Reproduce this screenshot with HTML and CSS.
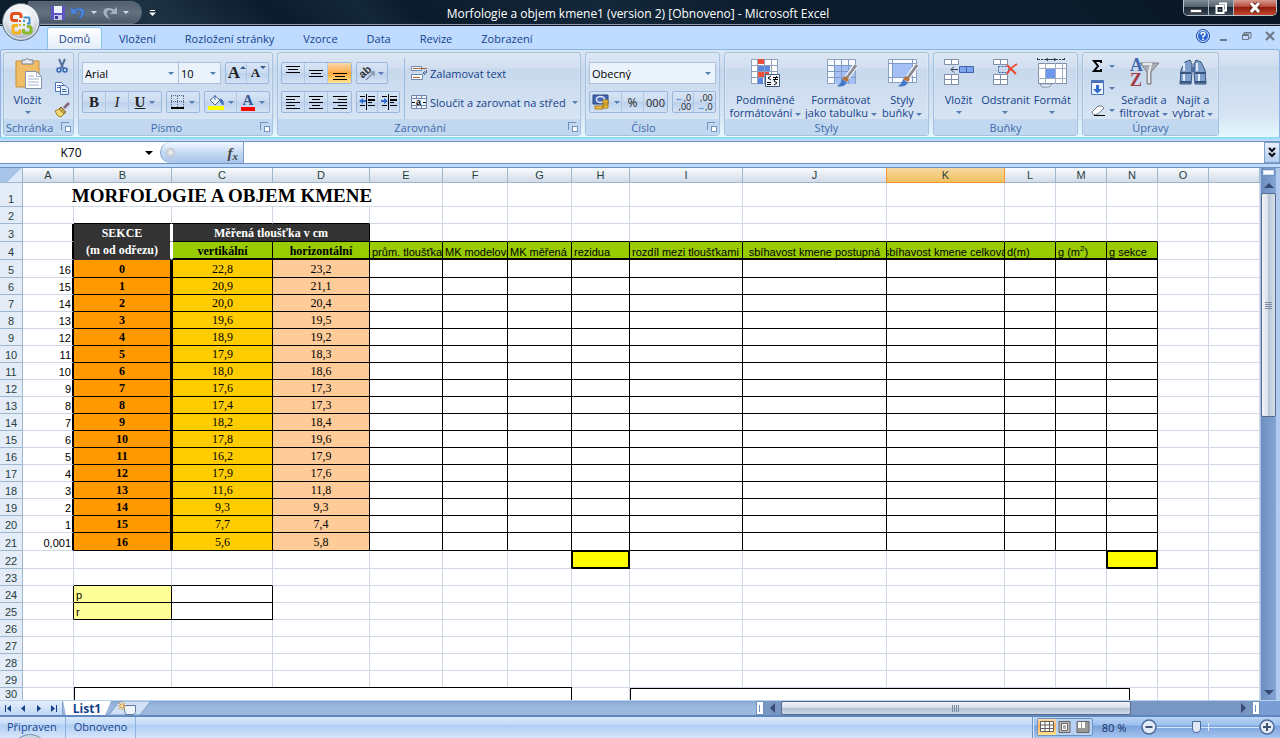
FILE: index.html
```html
<!DOCTYPE html>
<html lang="cs">
<head>
<meta charset="utf-8">
<title>Morfologie a objem kmene1 - Microsoft Excel</title>
<link rel="stylesheet" href="styles.css">
</head>
<body>
<div class="app">
<header class="titlebar">
  <button class="orb" aria-label="Office">
    <svg width="40" height="40" viewBox="0 0 40 40"><defs><radialGradient id="og" cx=".5" cy=".3" r=".75"><stop offset="0" stop-color="#fff"/><stop offset=".55" stop-color="#e4e8ee"/><stop offset="1" stop-color="#8e9cb2"/></radialGradient></defs><circle cx="20" cy="20" r="18.5" fill="url(#og)" stroke="#5c7086"/><circle cx="20" cy="20" r="17" fill="none" stroke="#fff" stroke-opacity=".8"/>
    <g fill="none"><path d="M17 18.500h-4q-2.500 0-2.500-2.500v-2q0-2.500 2.500-2.500h4.500q2.500 0 2.500 2.500v2" stroke="#e4511b" stroke-width="3"/><path d="M22.500 15.500h5q1 0 1 1v5h-2.500" stroke="#3f8fd0" stroke-width="2"/><path d="M17 23.500h-4q-1 0-1 1v4.500q0 2 2 2h3.500q1.500 0 1.500-1.500v-2" stroke="#f3b120" stroke-width="3"/><path d="M22.500 27v2q0 2 2 2h3.500q2 0 2-2v-2.500q0-2-2-2h-2" stroke="#8cb82e" stroke-width="3"/></g><path d="M18 18h2v2h-2z" fill="#e4511b"/><path d="M22 18h2v2h-2z" fill="#3f8fd0"/><path d="M18 22h2v2h-2z" fill="#f3b120"/><path d="M22 22h2v2h-2z" fill="#8cb82e"/></svg>
  </button>
  <div class="qat">
    <button aria-label="Uložit"><svg width="14" height="14" viewBox="0 0 14 14"><path d="M0 0h14v14H1L0 13z" fill="#5a55c4"/><path d="M3 0h8v7H3z" fill="#eef3fb"/><path d="M3 9h8v5H3z" fill="#c9cdea"/><path d="M4 10h3v3H4z" fill="#3a3590"/></svg></button>
    <button aria-label="Zpět"><svg width="14" height="14" viewBox="0 0 14 14"><path d="M0 1v7h7L4.500 5.500Q8 2.500 10 5.500q1 3-3 8 7-3 6.500-8.500-2-5-10.500-1.500z" fill="#4d86de" stroke="#2d58a4" stroke-width=".5"/></svg></button><i class="dd light"></i>
    <button aria-label="Znovu"><svg width="14" height="14" viewBox="0 0 14 14"><path d="M14 1v7H7l2.500-2.500Q6 2.500 4 5.500q-1 3 3 8-7-3-6.500-8.500 2-5 10.500-1.500z" fill="#a4b1c1"/></svg></button><i class="dd light"></i>
  </div>
  <button class="more" aria-label="Přizpůsobit panel"><svg width="7" height="6"><path d="M1 .5h5" stroke="#fff"/><path d="M0 2.500h7L3.500 6z" fill="#fff"/></svg></button>
  <h1>Morfologie a objem kmene1 (version 2) [Obnoveno] - Microsoft Excel</h1>
  <div class="win">
    <button aria-label="Minimalizovat"><svg width="12" height="12"><path d="M.5 7.500h11v3H.5z" fill="#fff" stroke="#555"/></svg></button>
    <button aria-label="Obnovit"><svg width="12" height="12"><path d="M4 1.500h7v7h-2M1.500 4h7v7h-7z" fill="none" stroke="#fff" stroke-width="2"/><path d="M4.500 7h1v1h-1z" fill="#fff"/></svg></button>
    <button class="close" aria-label="Zavřít"><svg width="12" height="12"><path d="M2 1l8 9M10 1l-8 9" stroke="#6b2a20" stroke-width="5"/><path d="M2 1l8 9M10 1l-8 9" stroke="#fff" stroke-width="3"/></svg></button>
  </div>
</header>
<nav class="tabs">
  <button class="active">Domů</button><button>Vložení</button><button>Rozložení stránky</button><button>Vzorce</button><button>Data</button><button>Revize</button><button>Zobrazení</button>
  <div class="docctl">
    <button aria-label="Nápověda"><svg width="14" height="14"><circle cx="7" cy="7" r="6.500" fill="#2c67d4" stroke="#234a99"/><circle cx="7" cy="7" r="5.500" fill="none" stroke="#dce9ff"/><path d="M5 5.500q0-2 2-2t2 1.800Q9 6.500 7 7.500v1" fill="none" stroke="#fff" stroke-width="1.500"/><path d="M6.300 9.500h1.500V11H6.300z" fill="#fff"/></svg></button>
    <button aria-label="Minimalizovat okno"><svg width="10" height="10"><path d="M1 8h7v2H1z" fill="#6c7886"/></svg></button>
    <button aria-label="Obnovit okno"><svg width="10" height="10"><path d="M.5 3.500h6v5h-6zM2 3V1.500h7V7H7M0 4.500h7M2 2h7" fill="none" stroke="#6c7886"/></svg></button>
    <button aria-label="Zavřít okno"><svg width="10" height="10"><path d="M1 1l8 8M9 1L1 9" stroke="#6c7886" stroke-width="2"/></svg></button>
  </div>
</nav>
<section class="ribbon">
  <div class="group g-clip">
    <div class="body clip">
      <button class="big"><svg width="30" height="32" viewBox="0 0 30 32"><path d="M3 3h23v26H3z" fill="#efbd68" stroke="#c58f3c"/><path d="M9 2h3q2-3 5 0h3v4H9z" fill="#e6e9ee" stroke="#76808f"/><path d="M12.500 13.500h11l5 5v12h-16z" fill="#fff" stroke="#8291ac"/><path d="M23.500 13.500v5h5M15 18h6M15 21h11M15 24h11M15 27h11" fill="none" stroke="#9fb2d0"/></svg>Vložit<i class="dd"></i></button>
      <div class="stack">
        <button aria-label="Vyjmout"><svg width="16" height="16"><path d="M5 1l4 9M11 1L7 10" stroke="#56719b" stroke-width="2"/><circle cx="5" cy="12" r="2" fill="none" stroke="#3264b0" stroke-width="1.500"/><circle cx="11" cy="12" r="2" fill="none" stroke="#3264b0" stroke-width="1.500"/></svg></button>
        <button aria-label="Kopírovat"><svg width="16" height="16"><path d="M1.500 2.500h6l2 2v7h-8z" fill="#fff" stroke="#4a72b4"/><path d="M6.500 5.500h5l3 3v6h-8z" fill="#e5eefb" stroke="#4a72b4"/><path d="M3 5.500h3M3 7.500h3M8 9.500h4M8 11.500h5" stroke="#4a72b4"/></svg></button>
        <button aria-label="Kopírovat formát"><svg width="16" height="16"><path d="M15 1l-5 5" stroke="#8a6a80" stroke-width="3"/><path d="M7 5l5 5-2 2-5-5z" fill="#c8a94b" stroke="#7a6426"/><path d="M5 7l5 5-3 3Q3 15 1 9z" fill="#f2d873" stroke="#9a8235"/></svg></button>
      </div>
    </div>
    <footer>Schránka<i class="launch"></i></footer>
  </div>
  <div class="group g-font">
    <div class="body rows">
      <div class="row">
        <span class="joined"><label class="sel name"><select aria-label="Písmo"><option>Arial</option></select><i class="dd"></i></label><label class="sel size"><select aria-label="Velikost"><option>10</option></select><i class="dd"></i></label></span>
        <span class="set two"><button aria-label="Zvětšit písmo"><b class="ser a1">A</b><i class="mini up"></i></button><button aria-label="Zmenšit písmo"><b class="ser a2">A</b><i class="mini"></i></button></span>
      </div>
      <div class="row">
        <span class="set"><button><b class="ser">B</b></button><button><em class="ser">I</em></button><button class="wide"><b class="ser"><u>U</u></b><i class="dd"></i></button></span>
        <span class="set"><button class="wide" aria-label="Ohraničení"><svg width="14" height="14"><path d="M.5 1v12M6.500 1v12M12.500 1v12M0 .5h13M0 6.500h13" stroke="#56688a" stroke-dasharray="1 1"/><path d="M0 13h13" stroke="#000" stroke-width="2"/></svg><i class="dd"></i></button></span>
        <span class="set"><button class="wide" aria-label="Barva výplně"><svg width="16" height="16"><path d="M2 6l5-4 5 4-5 5z" fill="#eef3fb" stroke="#526a92"/><path d="M7 1v5M12 5q4 1 3 6l-3-4" fill="#3e6ab6" stroke="#3e6ab6"/><path d="M0 12h16v4H0z" fill="#ff0"/></svg><i class="dd"></i></button><button class="wide fc" aria-label="Barva písma"><b class="ser">A</b><i class="dd"></i></button></span>
      </div>
    </div>
    <footer>Písmo<i class="launch"></i></footer>
  </div>
  <div class="group g-align">
    <div class="body cols">
      <div class="rows">
        <div class="row">
          <span class="set"><button aria-label="Nahoru"><svg width="16" height="16"><path d="M1 1.500h14M3 4.500h10M1 7.500h14" stroke="#000"/></svg></button><button aria-label="Na střed svisle"><svg width="16" height="16"><path d="M1 5.500h14M3 8.500h10M1 11.500h14" stroke="#000"/></svg></button><button class="on" aria-label="Dolů"><svg width="16" height="16"><path d="M1 8.500h14M3 11.500h10M1 14.500h14" stroke="#000"/></svg></button></span>
          <span class="set"><button class="ori" aria-label="Orientace"><svg width="16" height="16"><text x="0" y="11" transform="rotate(-42 5 9)" font-family="Liberation Sans" font-size="11" font-weight="bold" fill="#333">ab</text><path d="M6 15l8-8M14 11V7h-4" fill="none" stroke="#8795aa" stroke-width="1.500"/></svg><i class="dd"></i></button></span>
        </div>
        <div class="row">
          <span class="set"><button aria-label="Vlevo"><svg width="16" height="16"><path d="M1 2.500h14M1 5.500h9M1 8.500h14M1 11.500h9M1 14.500h14" stroke="#000"/></svg></button><button aria-label="Na střed"><svg width="16" height="16"><path d="M1 2.500h14M4 5.500h8M1 8.500h14M4 11.500h8M1 14.500h14" stroke="#000"/></svg></button><button aria-label="Vpravo"><svg width="16" height="16"><path d="M1 2.500h14M6 5.500h9M1 8.500h14M6 11.500h9M1 14.500h14" stroke="#000"/></svg></button></span>
          <span class="set two"><button aria-label="Zmenšit odsazení"><svg width="16" height="16"><path d="M1 2.500h5M9 2.500h7M9 8.500h4M1 11.500h5M9 11.500h7M7.500 0v16" stroke="#000"/><path d="M9 5h7v2H9z"/><path d="M0 7l4-3v2h3v2H4v2z" fill="#2f6ad0"/></svg></button><button aria-label="Zvětšit odsazení"><svg width="16" height="16"><path d="M1 2.500h5M9 2.500h7M9 8.500h4M1 11.500h5M9 11.500h7M7.500 0v16" stroke="#000"/><path d="M9 5h7v2H9z"/><path d="M7 7L3 4v2H0v2h3v2z" fill="#2f6ad0"/></svg></button></span>
        </div>
      </div>
      <div class="rows wrapcol">
        <button class="lbl"><svg width="16" height="16"><path d="M.5 1.500h10v4H.5zM.5 9.500h11v5H.5z" fill="#fff" stroke="#6f86ad"/><path d="M2 3.500h14M2 12.500h7" stroke="#a2672d"/><path d="M15.500 5v3H13M14 6l-2 2 2 2" fill="none" stroke="#4a6896"/></svg>Zalamovat text</button>
        <button class="lbl"><svg width="16" height="16"><path d="M.5 1.500h15v13H.5zM.5 4.500h15M.5 11.500h15M5.500 1v3M10.500 1v3M5.500 12v3M10.500 12v3" fill="#eef4fc" stroke="#6f86ad"/><path d="M1 8.500h3M12 8.500h3" stroke="#000"/><text x="5" y="11" font-family="Liberation Sans" font-size="9" font-weight="bold">a</text></svg>Sloučit a zarovnat na střed<i class="dd"></i></button>
      </div>
    </div>
    <footer>Zarovnání<i class="launch"></i></footer>
  </div>
  <div class="group g-num">
    <div class="body rows">
      <div class="row"><label class="sel full"><select aria-label="Formát čísla"><option>Obecný</option></select><i class="dd"></i></label></div>
      <div class="row">
        <span class="set"><button class="wide" aria-label="Účetní formát"><svg width="18" height="16"><path d="M1 1h15v9H1z" fill="#4468b4" stroke="#28447c"/><ellipse cx="8.500" cy="5.500" rx="4" ry="3" fill="none" stroke="#dfe9f8" stroke-width="1.500"/><path d="M11 6h5v8h-5zM3 12h8v3H3z" fill="#eec044" stroke="#a87a18"/><path d="M11 9h5M11 11h5" stroke="#a87a18"/></svg><i class="dd"></i></button><button class="pc">%</button><button class="ooo">000</button></span>
        <span class="set two dec"><button aria-label="Přidat desetinné místo"><span><i>←</i>,0<br>,00</span></button><button aria-label="Odebrat desetinné místo"><span>,00<br><i>→</i>,0</span></button></span>
      </div>
    </div>
    <footer>Číslo<i class="launch"></i></footer>
  </div>
  <div class="group g-style">
    <div class="body bigs">
      <button class="big w76"><svg width="32" height="32"><path d="M2.500 1.500h26v24h-26z" fill="#fff" stroke="#8da0bd"/><path d="M8 1h7v5H8zM8 14h12v6H8z" fill="#ee5137"/><path d="M8 7h13v6H8zM8 20h6v6H8z" fill="#5c86dc"/><path d="M2 7.500h27M2 13.500h27M2 19.500h27M8.500 1v25M15.500 1v25M22.500 1v25" stroke="#8da0bd"/><path d="M16.500 16.500h14v12h-14z" fill="#f5f8fd" stroke="#42587d"/><path d="M22 18l-3 2 3 2M18 24.500h4M18 26.500h4M24 19.500h5M24 21.500h5M28 18l-3 5M25 23l3 2-3 2" fill="none" stroke="#000"/></svg><span>Podmíněné<br>formátování <i class="dd"></i></span></button>
      <button class="big w76"><svg width="32" height="32"><path d="M2.500 1.500h28v24h-28z" fill="#f7faff" stroke="#8da0bd"/><path d="M9 8h21v18H9z" fill="#a4c0f4"/><path d="M2 7.500h29M2 13.500h29M2 19.500h29M9.500 1v25M16.500 1v25M23.500 1v25" stroke="#7f9ac6"/><path d="M31 7L21 21" stroke="#fff" stroke-width="5"/><path d="M31 7L21 21" stroke="#8b8e96" stroke-width="3"/><path d="M20 18l4 3-2 3-5-3z" fill="#b9743b"/><path d="M17 21l5 4q-4 5-10 3 4-2 5-7z" fill="#4377c7"/></svg><span>Formátovat<br>jako tabulku <i class="dd"></i></span></button>
      <button class="big w46"><svg width="32" height="32"><path d="M2.500 1.500h28v23h-28z" fill="#f7faff" stroke="#8da0bd"/><path d="M7 6h19v13H7z" fill="#a4c0f4"/><path d="M2 5.500h29M2 19.500h29M6.500 1v24M26.500 1v24" stroke="#7f9ac6"/><path d="M31 7L21 21" stroke="#fff" stroke-width="5"/><path d="M31 7L21 21" stroke="#8b8e96" stroke-width="3"/><path d="M20 18l4 3-2 3-5-3z" fill="#b9743b"/><path d="M17 21l5 4q-4 5-10 3 4-2 5-7z" fill="#4377c7"/></svg><span>Styly<br>buňky <i class="dd"></i></span></button>
    </div>
    <footer>Styly</footer>
  </div>
  <div class="group g-cell">
    <div class="body bigs">
      <button class="big w46"><svg width="32" height="32"><path d="M1.500 1.500h14v5h-14zM8.500 1.500v5M1.500 16.500h14v10h-14zM8.500 16.500v10M1.500 21.500h14" fill="#fff" stroke="#7f8fa9"/><path d="M16.500 8.500h14v6h-14zM23.500 8.500v6" fill="#7ea4ee" stroke="#3f62ab"/><path d="M8 11.500h7M11 8.500l-3 3 3 3" fill="none" stroke="#333f55"/></svg>Vložit<i class="dd"></i></button>
      <button class="big w48"><svg width="32" height="32"><path d="M4.500 1.500h14v5h-14zM11.500 1.500v5M4.500 16.500h14v10h-14zM11.500 16.500v10M4.500 21.500h14" fill="#fff" stroke="#7f8fa9"/><path d="M9.500 8.500h10v6h-10z" fill="none" stroke="#3f62ab" stroke-dasharray="2 1"/><path d="M18 7l9 9M28 6q-7 4-10 10" stroke="#f04a2e" stroke-width="2" fill="none"/></svg>Odstranit<i class="dd"></i></button>
      <button class="big w46"><svg width="32" height="32"><path d="M2.500 5.500h28v20h-28z" fill="#fff" stroke="#7f8fa9"/><path d="M10 10h9v11h-9z" fill="#6c97ea"/><path d="M2 10.500h29M2 20.500h29M9.500 5v21M19.500 5v21M26.500 5v21" stroke="#9dadc6"/><path d="M2 1.500h26M1.500 0v3M28.500 0v3" stroke="#333f55" stroke-dasharray="2 1"/><path d="M10 1.500h10M12 0l-2 1.500 2 1.500M18 0l2 1.500-2 1.500" fill="none" stroke="#333f55"/><path d="M4 26h12l-3 3H6z" fill="#eef2f8" stroke="#7f8fa9"/></svg>Formát<i class="dd"></i></button>
    </div>
    <footer>Buňky</footer>
  </div>
  <div class="group g-edit">
    <div class="body cols">
      <div class="stack edit">
        <button aria-label="Součet"><svg width="14" height="16"><path d="M10 5V3H3l4 5-4 5h7v-2" fill="none" stroke="#000" stroke-width="2"/></svg><i class="dd"></i></button>
        <button aria-label="Výplň"><svg width="14" height="16"><path d="M.5.500h12v14H.5z" fill="#eaf2fd" stroke="#4a72b4"/><path d="M1 2h11" stroke="#4a72b4" stroke-width="2"/><path d="M5 5h3v4h3l-4.500 4.500L2 9h3z" fill="#2f6ad0"/></svg><i class="dd"></i></button>
        <button aria-label="Vymazat"><svg width="14" height="16"><path d="M1 10l6-6q5-1 6 2l-6 6q-6 2-6-2z" fill="#fff" stroke="#6b7789"/><path d="M3 13.500h11" stroke="#000"/></svg><i class="dd"></i></button>
      </div>
      <button class="big w56"><svg width="32" height="32"><path d="M12 5h19l-8 9v12h-4V14z" fill="#a9acb2" stroke="#7c7f85"/><path d="M15 6h8l-2 8v11" fill="none" stroke="#e8e9eb" stroke-width="2"/><text x="2" y="13" font-family="Liberation Serif" font-size="18" font-weight="bold" fill="#4166ae">A</text><text x="2" y="28" font-family="Liberation Serif" font-size="18" font-weight="bold" fill="#a43b42">Z</text></svg><span>Seřadit a<br>filtrovat <i class="dd"></i></span></button>
      <button class="big w46"><svg width="32" height="32"><path d="M8 4l5-2 2 4v8l-1 12H3l1-14zM24 4l-5-2-2 4v8l1 12h11l-1-14z" fill="#7f9fcc" stroke="#38557f"/><path d="M7 5v8M7 16v9M20 5v8M22 16v9" stroke="#dfeafa" stroke-width="2"/><path d="M3 15h11M18 15h11M3 24h11M18 24h11" stroke="#38557f" stroke-width="2"/><path d="M14 9h4v5h-4z" fill="#506f9e"/></svg><span>Najít a<br>vybrat <i class="dd"></i></span></button>
    </div>
    <footer>Úpravy</footer>
  </div>
</section>
<div class="formula">
  <input class="namebox" aria-label="Pole názvů" value="K70"><i class="dd black"></i>
  <div class="fx"><span class="knob"></span><button aria-label="Vložit funkci">f<sub>x</sub></button></div>
  <input class="fbar" aria-label="Řádek vzorců">
  <button class="expand" aria-label="Rozbalit"><svg width="9" height="11"><path d="M1 1l3 3 3-3M1 6l3 3 3-3" fill="none" stroke="#000" stroke-width="2"/></svg></button>
</div>
<main class="work">
  <div class="sheet">
  <table>
    <colgroup><col class="c0"><col class="cA"><col class="cB"><col class="cC"><col class="cD"><col class="cE"><col class="cF"><col class="cG"><col class="cH"><col class="cI"><col class="cJ"><col class="cK"><col class="cL"><col class="cL"><col class="cL"><col class="cL"><col></colgroup>
    <thead><tr><th class="corner"><th>A<th>B<th>C<th>D<th>E<th>F<th>G<th>H<th>I<th>J<th class="cur">K<th>L<th>M<th>N<th>O<th></tr></thead>
    <tbody>
    <tr class="r1"><th>1<td class="nr"><td colspan="3" class="nr"><div class="heading">MORFOLOGIE A OBJEM KMENE</div><td><td><td><td><td><td><td><td><td><td><td><td></tr>
    <tr class="r2"><th>2<td><td class="kb"><td class="kb"><td class="kb"><td><td><td><td><td><td><td><td><td><td><td><td></tr>
    <tr class="r3"><th>3<td class="tl"><td class="dark nob">SEKCE<td colspan="2" class="dark kb kr wl">Měřená tloušťka v cm<td class="kb"><td class="kb"><td class="kb"><td class="kb"><td class="kb"><td class="kb"><td class="kb"><td class="kb"><td class="kb"><td class="kb"><td><td></tr>
    <tr class="r3 green"><th>4<td class="tl"><td class="dark nob">(m od odřezu)<td class="gb wl">vertikální<td class="gb">horizontální<td>prům. tloušťka<td>MK modelová<td>MK měřená<td>rezidua<td>rozdíl mezi tloušťkami<td class="c">sbíhavost kmene postupná<td class="mid"><div>sbíhavost kmene celková</div><td>d(m)<td>g (m<sup>2</sup>)<td>g sekce<td class="w"><td class="w"></tr>
    <tr class="d r3"><th>5<td>16<td>0<td>22,8<td>23,2<td><td><td><td><td><td><td><td><td><td><td><td></tr>
    <tr class="d"><th>6<td>15<td>1<td>20,9<td>21,1<td><td><td><td><td><td><td><td><td><td><td><td></tr>
    <tr class="d"><th>7<td>14<td>2<td>20,0<td>20,4<td><td><td><td><td><td><td><td><td><td><td><td></tr>
    <tr class="d"><th>8<td>13<td>3<td>19,6<td>19,5<td><td><td><td><td><td><td><td><td><td><td><td></tr>
    <tr class="d"><th>9<td>12<td>4<td>18,9<td>19,2<td><td><td><td><td><td><td><td><td><td><td><td></tr>
    <tr class="d"><th>10<td>11<td>5<td>17,9<td>18,3<td><td><td><td><td><td><td><td><td><td><td><td></tr>
    <tr class="d"><th>11<td>10<td>6<td>18,0<td>18,6<td><td><td><td><td><td><td><td><td><td><td><td></tr>
    <tr class="d"><th>12<td>9<td>7<td>17,6<td>17,3<td><td><td><td><td><td><td><td><td><td><td><td></tr>
    <tr class="d"><th>13<td>8<td>8<td>17,4<td>17,3<td><td><td><td><td><td><td><td><td><td><td><td></tr>
    <tr class="d"><th>14<td>7<td>9<td>18,2<td>18,4<td><td><td><td><td><td><td><td><td><td><td><td></tr>
    <tr class="d"><th>15<td>6<td>10<td>17,8<td>19,6<td><td><td><td><td><td><td><td><td><td><td><td></tr>
    <tr class="d"><th>16<td>5<td>11<td>16,2<td>17,9<td><td><td><td><td><td><td><td><td><td><td><td></tr>
    <tr class="d"><th>17<td>4<td>12<td>17,9<td>17,6<td><td><td><td><td><td><td><td><td><td><td><td></tr>
    <tr class="d"><th>18<td>3<td>13<td>11,6<td>11,8<td><td><td><td><td><td><td><td><td><td><td><td></tr>
    <tr class="d"><th>19<td>2<td>14<td>9,3<td>9,3<td><td><td><td><td><td><td><td><td><td><td><td></tr>
    <tr class="d"><th>20<td>1<td>15<td>7,7<td>7,4<td><td><td><td><td><td><td><td><td><td><td><td></tr>
    <tr class="d r3"><th>21<td>0,001<td>16<td>5,6<td>5,8<td><td><td><td><td><td><td><td><td><td><td><td></tr>
    <tr class="r3"><th>22<td><td><td><td><td><td><td class="kr"><td class="yel"><td><td><td><td><td class="kr"><td class="yel"><td><td></tr>
    <tr><th>23<td><td class="kb"><td class="kb"><td><td><td><td><td><td><td><td><td><td><td><td><td></tr>
    <tr><th>24<td class="kr"><td class="pr kb kr">p<td class="kb kr"><td><td><td><td><td><td><td><td><td><td><td><td><td></tr>
    <tr><th>25<td class="kr"><td class="pr kb kr">r<td class="kb kr"><td><td><td><td><td><td><td><td><td><td><td><td><td></tr>
    <tr><th>26<td><td><td><td><td><td><td><td><td><td><td><td><td><td><td><td></tr>
    <tr><th>27<td><td><td><td><td><td><td><td><td><td><td><td><td><td><td><td></tr>
    <tr><th>28<td><td><td><td><td><td><td><td><td><td><td><td><td><td><td><td></tr>
    <tr><th>29<td><td><td><td><td><td><td><td><td><td><td><td><td><td><td><td></tr>
    <tr><th class="half">30<td><td><td><td><td><td><td><td><td><td><td><td><td><td><td><td></tr>
    </tbody>
  </table>
  <div class="chart chart-a"></div>
  <div class="chart chart-b"></div>
  </div>
  <aside class="vscroll"><span class="split"></span><button aria-label="Nahoru"><i class="tri up"></i></button><span class="thumb"></span><button class="down" aria-label="Dolů"><i class="tri"></i></button></aside>
</main>
<div class="sheetbar">
  <div class="navs"><button aria-label="První"><svg width="9" height="9"><path d="M1.500 1v7" stroke="#15428b"/><path d="M7 1v7L3 4.500z" fill="#15428b"/></svg></button><button aria-label="Předchozí"><svg width="9" height="9"><path d="M6 1v7L2 4.500z" fill="#15428b"/></svg></button><button aria-label="Další"><svg width="9" height="9"><path d="M3 1v7l4-3.500z" fill="#15428b"/></svg></button><button aria-label="Poslední"><svg width="9" height="9"><path d="M7.500 1v7" stroke="#15428b"/><path d="M2 1v7l4-3.500z" fill="#15428b"/></svg></button></div>
  <button class="stab">List1</button>
  <button class="newtab" aria-label="Vložit list"><svg width="46" height="15"><path d="M0 14q4 0 6-4l6-8q2-2 6-2h27L34 14z" fill="#cfe0f7" stroke="#7c9dcd"/><path d="M17.500 4.500h12v7l-2 2h-8z" fill="#eef4fc" stroke="#667aa0"/><path d="M16 1v8M12 5h8M13 2l6 6M19 2l-6 6" stroke="#e79b25"/><circle cx="16" cy="5" r="1" fill="#fff"/></svg></button>
  <span class="grow"></span>
  <span class="hsplit"></span><button class="harrow" aria-label="Vlevo"><i class="side l"></i></button>
  <div class="htrack"><span class="hthumb"><i></i></span></div><button class="harrow" aria-label="Vpravo"><i class="side r"></i></button><span class="hsplit"></span><span class="hend"></span>
</div>
<footer class="status">
  <span class="cell">Připraven<i class="bump"></i></span><span class="cell">Obnoveno</span><span class="grow"></span>
  <div class="zoomer">
    <div class="views"><button class="on" aria-label="Normální"><svg width="14" height="12"><path d="M.5.500h13v10H.5zM.5 4h13M.5 7.500h13M5 .5v10M9.500.500v10" fill="#fff" stroke="#66605a"/></svg></button><button aria-label="Rozložení"><svg width="14" height="12"><path d="M1 .5h11v11H1z" fill="#b9b9b9" stroke="#666"/><path d="M3.500 2.500h6v7h-6zM5 5h3M5 7h3" fill="#fff" stroke="#666"/></svg></button><button aria-label="Konce stránek"><svg width="14" height="12"><path d="M1 .5h12v11H1z" fill="#999" stroke="#666"/><path d="M2 1h3v6H2zM6 1h3v6H6z" fill="#fff"/></svg></button></div>
    <button class="pct">80 %</button>
    <button aria-label="Oddálit"><svg width="16" height="16"><circle cx="8" cy="8" r="7" fill="#e3ebf6" stroke="#4c6c9c" stroke-width="1.500"/><path d="M4.500 8h7" stroke="#3f5470" stroke-width="2"/></svg></button>
    <input type="range" min="0" max="100" value="38" aria-label="Lupa">
    <button aria-label="Přiblížit"><svg width="16" height="16"><circle cx="8" cy="8" r="7" fill="#e3ebf6" stroke="#4c6c9c" stroke-width="1.500"/><path d="M4 8h8M8 4v8" stroke="#3f5470" stroke-width="2"/></svg></button>
  </div>
</footer>
</div>
</body>
</html>
```
FILE: styles.css
```css
* { box-sizing: border-box; }
body { margin: 0; }
.app { height: 100vh; display: flex; flex-direction: column; overflow: hidden; background: #bfdbff; color: #15428b; font: 11px/13px "Open Sans", "Noto Sans", sans-serif; }
button, input, select { font: inherit; color: inherit; margin: 0; padding: 0; border: 0; background: none; }
button { display: flex; align-items: center; justify-content: center; }
svg { display: block; flex: none; }
.grow { flex: 1; }

.dd { display: inline-block; flex: none; vertical-align: middle; border: 3px solid transparent; border-top-color: #567db1; border-bottom: 0; }
.dd.light { border-top-color: #d5e0ee; }
.dd.black { border-width: 4px 4px 0; border-top-color: #000; }

/* Title bar */
.titlebar { position: relative; flex: none; height: 26px; display: flex; align-items: center; color: #fff; border-bottom: 1px solid #0a1520; box-shadow: inset 0 -1px #8f9ba5; background: linear-gradient(40deg, #0d1d2c 0 8%, #1d3344 12%, #1a2e40 15%, #0b1b2c 22%, #14283a 29%, #0b1b2c 33%, #14283a 48%, #0b1c2d 60%, #0b1b2b 84%, #081522); }
.titlebar h1 { flex: 1; margin: 2px 160px 0 0; font-size: 12px; line-height: 16px; font-weight: 400; text-align: center; white-space: nowrap; }
.orb { position: absolute; left: 1px; top: 2px; z-index: 3; }
.qat { width: 114px; height: 23px; margin-left: 28px; padding-left: 23px; display: flex; align-items: center; gap: 6px; border: 1px solid #56687a; border-left: 0; border-radius: 0 12px 12px 0; background: linear-gradient(#52606f, #64717f 50%, #4b5967); }
.more { margin-left: 7px; }
.win { position: absolute; right: 3px; top: 0; display: flex; height: 16px; border: 1px solid #b9c2ca; border-top: 0; border-radius: 0 0 5px 5px; overflow: hidden; }
.win button { width: 25px; border-right: 1px solid #a9b4bd; background: linear-gradient(#7f8b96, #56626f 45%, #1a2835 50%, #3b4855); }
.win .close { width: 42px; border: 0; background: linear-gradient(#d59b90, #b9493a 45%, #8e1d0d 50%, #c5482c); }

/* Ribbon tabs */
.tabs { flex: none; height: 23px; display: flex; align-items: flex-end; gap: 1px; padding-left: 47px; font-size: 11px; }
.tabs > button { height: 22px; padding: 0 14px; }
.tabs > .active { min-width: 55px; padding: 0 10px; margin-right: 2px; border: 1px solid #86c5e8; border-bottom: 0; border-radius: 3px 3px 0 0; background: linear-gradient(#fff, #e3edf9); }
.docctl { margin: 0 5px 6px auto; display: flex; gap: 13px; align-items: center; }
.docctl button:first-child { margin-right: -4px; }

/* Ribbon */
.ribbon { flex: none; display: flex; gap: 4px; height: 90px; padding: 2px 2px 1px; border: 1px solid #8db2e3; border-width: 1px 1px 2px; border-bottom-color: #8fdcf5; border-radius: 3px; background: linear-gradient(#dbe6f4, #cfdef0 16px, #c8d8ed 17px, #d6e4f4 65px, #e4f8ff); }
.group { flex: none; display: flex; flex-direction: column; border: 1px solid #a5c3df; border-radius: 3px; box-shadow: inset 0 0 0 1px #e3eefa66; background: linear-gradient(#dce7f4, #d2dff0 15px, #c8d8ec 16px, #dbe8f6); }
.group > footer { height: 16px; margin-top: auto; display: flex; align-items: center; justify-content: center; color: #3e6aaa; background: #c1d8f0; position: relative; }
.g-font > footer, .g-align > footer, .g-num > footer { padding-right: 18px; }
.g-clip > footer { justify-content: flex-start; padding-left: 2px; }
.launch { position: absolute; right: 4px; top: 3px; width: 8px; height: 8px; border: 1px solid #6f93bf; border-width: 1px 0 0 1px; }
.launch::after { content: ""; position: absolute; left: 3px; top: 3px; width: 4px; height: 4px; border: 1px solid #6f93bf; background: #fff; }
.g-clip { width: 71px; }
.g-font { width: 195px; }
.g-align { width: 304px; }
.g-num { width: 135px; }
.g-style { width: 205px; }
.g-cell { width: 145px; }
.g-edit { width: 137px; }
.body { flex: 1; display: flex; padding: 9px 3px 0; }
.rows { display: flex; flex-direction: column; gap: 7px; }
.row { display: flex; gap: 4px; height: 22px; }
.cols, .bigs, .clip { padding-top: 5px; }
.clip { padding-left: 1px; }
.clip, .bigs { gap: 1px; }
.cols > .rows { padding-top: 4px; }
.stack { display: flex; flex-direction: column; gap: 6px; padding-left: 3px; }
.edit { width: 30px; padding-left: 5px; margin-right: 2px; }
.edit button { gap: 4px; }
.big { flex-direction: column; justify-content: flex-start; align-self: flex-start; width: 46px; white-space: nowrap; line-height: 13px; gap: 3px; }
.big > .dd { margin-top: 2px; }
.w48 { width: 50px; }
.w56 { width: 56px; }
.w76 { width: 75px; }
.sel { position: relative; display: flex; height: 22px; border: 1px solid #abc1de; background: #eaf2fb; color: #000; }
.sel select { appearance: none; width: 100%; padding: 0 2px; }
.sel .dd { position: absolute; right: 4px; top: 9px; pointer-events: none; }
.joined { display: flex; }
.name { width: 97px; }
.size { width: 43px; margin-left: -1px; }
.full { width: 127px; }
.set { display: flex; border: 1px solid #9ab8dd; border-radius: 2px; background: linear-gradient(#d7e4f5, #cbdbf0 48%, #bdd1ec 50%, #d2e2f5); }
.set button { position: relative; width: 23px; gap: 4px; border-right: 1px solid #b0c8e6; color: #222; }
.set button:last-child { border-right: 0; }
.set .wide { width: 32px; }
.set .ori { width: 30px; gap: 2px; }
.set.two button { width: 21px; }
.set .on { background: linear-gradient(#fbd7a8, #fdb55c 40%, #fda63b 50%, #ffe58e); }
.ser { font-family: "Liberation Serif", serif; font-size: 15px; line-height: 18px; }
.a1 { font-size: 17px; }
.a2 { font-size: 13px; }
.mini { border: 3px solid transparent; border-top-color: #34588f; border-bottom: 0; align-self: flex-start; margin: 3px -2px 0 -4px; }
.mini.up { border: 3px solid transparent; border-bottom-color: #34588f; border-top: 0; }
.fc .ser { color: #34588f; border-bottom: 4px solid red; line-height: 13px; padding: 0 2px; }
.set .pc { width: 22px; font-size: 12px; }
.ooo { font-size: 11px; }
.dec span { font-size: 9px; line-height: 9px; text-align: right; color: #222; }
.dec i { font-style: normal; color: #2f6ad0; }
.wrapcol { border-left: 1px solid #9cbcdf; margin-left: 4px; padding-left: 6px; }
.lbl { height: 22px; justify-content: flex-start; gap: 3px; white-space: nowrap; }
.lbl .dd { margin-left: 3px; }

/* Formula bar */
.formula { flex: none; height: 23px; margin: 2px 0 3px; display: flex; align-items: stretch; border: 1px solid #6e92bd; border-width: 1px 0; background: #fff; color: #000; font-size: 12px; }
.namebox { width: 142px; text-align: center; }
.formula > .dd { align-self: center; margin: 0 7px 0 3px; }
.fx { width: 84px; display: flex; align-items: center; justify-content: space-between; padding: 0 5px; border: 1px solid #7d9fcd; border-width: 0 1px; border-radius: 11px 0 0 11px; background: linear-gradient(#f3f8ff, #c6daf4 50%, #a9c4ea); }
.knob { width: 9px; height: 9px; border-radius: 50%; background: radial-gradient(#f4f5f7, #a9aeb8); }
.fx button { display: block; font: italic bold 15px/18px "Liberation Serif", serif; color: #444; }
.fx sub { font-size: 11px; vertical-align: -2px; line-height: 8px; }
.fbar { flex: 1; min-width: 0; }
.expand { width: 16px; border: 1px solid #7d9fcd; background: linear-gradient(#e8f1fc, #b3cbec); }

/* Sheet */
.work { flex: 1; min-height: 0; display: flex; border-top: 1px solid #6e92bd; }
.sheet { position: relative; flex: 1; min-width: 0; overflow: hidden; background: #fff; }
table { width: 100%; table-layout: fixed; border-collapse: separate; border-spacing: 0; color: #000; font: 11px/13px "Liberation Sans", sans-serif; }
.c0 { width: 23px; } .cA { width: 51px; } .cB { width: 98px; } .cC { width: 101px; } .cD { width: 97px; } .cE { width: 73px; } .cF { width: 65px; } .cG { width: 64px; } .cH { width: 58px; } .cI { width: 113px; } .cJ { width: 144px; } .cK { width: 118px; } .cL { width: 51px; }
th { padding: 0; font-weight: 400; color: #27413e; border: solid #9eb6ce; border-width: 0 1px 1px 0; }
thead tr { height: 15px; }
thead th { background: linear-gradient(#f9fcfd, #d3dbe9); }
thead .corner { background: linear-gradient(135deg, #a9c4e9 60%, #dbe8f8 60%); }
thead .cur { background: linear-gradient(#f9d99f, #f1c15f); border-color: #f29536; box-shadow: -1px 0 #f29536; }
tbody tr { height: 17px; }
tbody th { background: #e4ecf7; vertical-align: bottom; }
tbody .r1 { height: 24px; }
tbody .r3 { height: 18px; }
td { padding: 0 2px; border: solid #d0d7e5; border-width: 0 1px 1px 0; vertical-align: bottom; overflow: hidden; white-space: nowrap; }
.nr { border-right: 0; overflow: visible; }
.heading { display: flex; justify-content: center; font: bold 19px/21px "Liberation Serif", serif; }
.kb { border-bottom-color: #000; }
.kr { border-right-color: #000; }
.tl { border-right: 2px solid #000; }
.dark { background: #333; color: #fff; font: bold 12px/14px "Liberation Serif", serif; text-align: center; vertical-align: middle; }
.dark.nob { border-right: 2px solid #fff; border-bottom-color: #333; }
.wl { border-left: 1px solid #fff; }
.green td { border-right-color: #000; border-bottom: 2px solid #000; line-height: 12px; }
.green td:nth-child(n+4) { background: #9c0; }
.green td:nth-child(2) { border-bottom: 1px solid #d0d7e5; }
.green td.dark { border-right-color: #fff; border-bottom-color: #333; }
.green td.w { background: #fff; border-color: #d0d7e5; border-bottom-width: 1px; }
.green .gb { font: bold 12px/14px "Liberation Serif", serif; text-align: center; }
.green .c { text-align: center; }
.mid div { display: flex; justify-content: center; }
sup { font-size: 8px; line-height: 6px; }
.d td { border-color: #000; }
.d td:nth-child(2) { text-align: right; border-right-width: 2px; border-bottom-color: #d0d7e5; padding-right: 1px; }
.d td:nth-child(3), .d td:nth-child(4), .d td:nth-child(5) { text-align: center; vertical-align: middle; font: 12px/14px "Liberation Serif", serif; }
.d td:nth-child(3) { background: #f90; font-weight: bold; border-right-width: 2px; }
.d td:nth-child(4) { background: #fc0; border-left-width: 1px; }
.d td:nth-child(5) { background: #fc9; }
.d td:nth-child(n+16) { border-color: #d0d7e5; }
.yel { background: #ff0; border-color: #000; box-shadow: inset 0 0 0 1px #000; }
.pr { background: #ff9; }
.half { vertical-align: top; }
.chart { position: absolute; top: 519px; height: 200px; background: #fff; border: 1px solid #000; }
.chart-a { left: 74px; width: 498px; }
.chart-b { left: 630px; width: 500px; top: 520px; }

.vscroll { flex: none; width: 20px; display: flex; flex-direction: column; border-left: 1px solid #a9c6ea; border-right: 4px solid #b0cbee; background: linear-gradient(90deg, #6c8fc0, #84a5d3); }
.split { height: 7px; margin: 1px; border: 1px solid #6e92bd; background: #fff; box-shadow: inset 0 0 0 1px #cfe0f5; }
.vscroll button { height: 16px; }
.tri { border: 5px solid transparent; border-top-color: #3a4a72; border-bottom: 0; }
.tri.up { border: 5px solid transparent; border-bottom-color: #3a4a72; border-top: 0; }
.thumb { height: 224px; border: 1px solid #58698c; border-radius: 2px; background: repeating-linear-gradient(#7c8ba3 0 1px, transparent 1px 2px) center / 7px 7px no-repeat, linear-gradient(90deg, #f1f4f8, #dbe1ea 45%, #b7c5d6 50%, #d7e0ea); }
.down { margin-top: auto; }

/* Sheet tabs */
.sheetbar { flex: none; height: 17px; display: flex; align-items: stretch; border-top: 1px solid #b9d0ee; border-bottom: 2px solid #5f86bd; background: linear-gradient(#86a6d3, #9db8de 5px, #9db8de); }
.navs { width: 63px; display: flex; align-items: center; justify-content: space-around; padding: 0 1px; background: linear-gradient(#e4effc, #bfd6f5); border-right: 1px solid #7c9dcd; }
.stab { width: 48px; font-weight: 700; font-size: 12px; background: #fff; clip-path: polygon(0 0, 100% 0, 88% 100%, 6% 100%); }
.newtab { margin-left: -5px; }
.hsplit { width: 8px; border: 1px solid #6e92bd; background: linear-gradient(#6e92bd, #6e92bd) 2px 3px / 1px 7px no-repeat, #fff; }
.harrow { width: 17px; background: #7796c1; }
.side { border: 5px solid transparent; }
.side.l { border-right-color: #3a4a72; border-left: 0; }
.side.r { border-left-color: #3a4a72; border-right: 0; }
.htrack { width: 454px; background: #7796c1; }
.hthumb { display: flex; width: 77%; height: 100%; align-items: center; justify-content: center; border: 1px solid #58698c; border-radius: 2px; background: linear-gradient(#f1f4f8, #dbe1ea 45%, #b1c1d3 50%, #cdd9e5); }
.hthumb i { width: 8px; height: 7px; background: repeating-linear-gradient(90deg, #7c8ba3 0 1px, transparent 1px 2px); }
.hend { width: 20px; background: #7a9ed4; }

/* Status bar */
.status { flex: none; height: 21px; display: flex; align-items: stretch; background: linear-gradient(#d9e8fb, #c5dcf8 7px, #afcdf5 8px, #d7e6fa); }
.cell { position: relative; display: flex; align-items: center; padding: 0 8px 2px; border-right: 1px solid #8fb2de; overflow: hidden; }
.cell:first-child { padding-left: 7px; }
.bump { position: absolute; left: 16px; top: 17px; width: 28px; height: 20px; border: 1px solid #7e9bb5; border-radius: 50%; background: #c9d8e3; }
.zoomer { width: 248px; display: flex; align-items: center; padding: 0 0 1px 4px; border-left: 1px solid #6e92bd; box-shadow: inset 1px 0 #dbe9fb; background: linear-gradient(#b9d3f5, #9dbfec 8px, #7ba3dd 9px, #a6c5ee); }
.views { display: flex; height: 18px; border: 1px solid #6e92bd; border-radius: 2px; background: #b9d2f3; }
.views button { width: 18px; }
.views .on { background: linear-gradient(#fbd7a8, #fdb55c 45%, #ffe58e); }
.pct { width: 42px; margin-right: 6px; color: #15305f; }
input[type=range] { appearance: none; width: 102px; height: 16px; background: linear-gradient(#e3edfa, #e3edfa) 50% 4px / 1px 8px no-repeat, linear-gradient(#d7e5f8, #d7e5f8) 0 8px / 100% 1px no-repeat; }
input[type=range]::-webkit-slider-thumb { appearance: none; width: 9px; height: 12px; border: 1px solid #4c6c9c; border-radius: 1px 1px 5px 5px; background: #dfe8f4; }
```
